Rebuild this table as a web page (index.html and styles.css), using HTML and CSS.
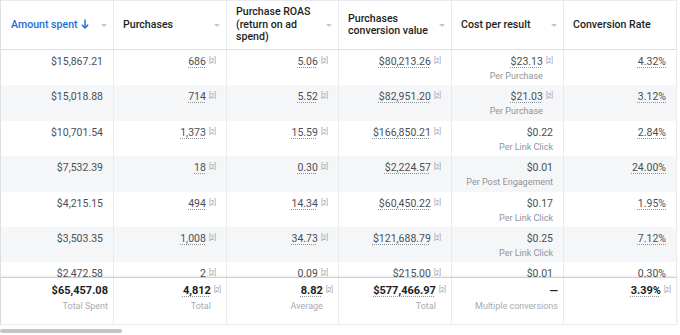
FILE: index.html
```html
<!DOCTYPE html>
<html lang="en">
<head>
  <meta charset="UTF-8">
  <title>Ads report</title>
  <link rel="stylesheet" href="styles.css">
</head>
<body>
  <div class="table">
    <div class="row head">
      <div class="th"><span class="title sorted">Amount spent <svg class="arrow" width="8" height="10" viewBox="0 0 8 10"><path d="M4 0.5V9M0.8 5.8L4 9L7.2 5.8" fill="none" stroke="currentColor" stroke-width="1.4"/></svg></span><span class="caret"></span></div>
      <div class="th"><span class="title">Purchases</span><span class="caret"></span></div>
      <div class="th"><span class="title">Purchase ROAS (return on ad spend)</span><span class="caret"></span></div>
      <div class="th"><span class="title">Purchases conversion value</span><span class="caret"></span></div>
      <div class="th"><span class="title">Cost per result</span><span class="caret"></span></div>
      <div class="th"><span class="title">Conversion Rate</span></div>
    </div>

    <div class="body">
      <div class="row">
        <div class="td"><div class="v">$15,867.21</div></div>
        <div class="td"><div class="v"><span class="u">686</span></div><span class="mk">[2]</span></div>
        <div class="td"><div class="v"><span class="u">5.06</span></div><span class="mk">[2]</span></div>
        <div class="td"><div class="v"><span class="u">$80,213.26</span></div><span class="mk">[2]</span></div>
        <div class="td"><div class="v"><span class="u">$23.13</span><div class="sub">Per Purchase</div></div><span class="mk">[2]</span></div>
        <div class="td"><div class="v"><span class="u">4.32%</span></div></div>
      </div>
      <div class="row alt">
        <div class="td"><div class="v">$15,018.88</div></div>
        <div class="td"><div class="v"><span class="u">714</span></div><span class="mk">[2]</span></div>
        <div class="td"><div class="v"><span class="u">5.52</span></div><span class="mk">[2]</span></div>
        <div class="td"><div class="v"><span class="u">$82,951.20</span></div><span class="mk">[2]</span></div>
        <div class="td"><div class="v"><span class="u">$21.03</span><div class="sub">Per Purchase</div></div><span class="mk">[2]</span></div>
        <div class="td"><div class="v"><span class="u">3.12%</span></div></div>
      </div>
      <div class="row">
        <div class="td"><div class="v">$10,701.54</div></div>
        <div class="td"><div class="v"><span class="u">1,373</span></div><span class="mk">[2]</span></div>
        <div class="td"><div class="v"><span class="u">15.59</span></div><span class="mk">[2]</span></div>
        <div class="td"><div class="v"><span class="u">$166,850.21</span></div><span class="mk">[2]</span></div>
        <div class="td"><div class="v">$0.22<div class="sub">Per Link Click</div></div></div>
        <div class="td"><div class="v"><span class="u">2.84%</span></div></div>
      </div>
      <div class="row alt">
        <div class="td"><div class="v">$7,532.39</div></div>
        <div class="td"><div class="v"><span class="u">18</span></div><span class="mk">[2]</span></div>
        <div class="td"><div class="v"><span class="u">0.30</span></div><span class="mk">[2]</span></div>
        <div class="td"><div class="v"><span class="u">$2,224.57</span></div><span class="mk">[2]</span></div>
        <div class="td"><div class="v">$0.01<div class="sub">Per Post Engagement</div></div></div>
        <div class="td"><div class="v"><span class="u">24.00%</span></div></div>
      </div>
      <div class="row">
        <div class="td"><div class="v">$4,215.15</div></div>
        <div class="td"><div class="v"><span class="u">494</span></div><span class="mk">[2]</span></div>
        <div class="td"><div class="v"><span class="u">14.34</span></div><span class="mk">[2]</span></div>
        <div class="td"><div class="v"><span class="u">$60,450.22</span></div><span class="mk">[2]</span></div>
        <div class="td"><div class="v">$0.17<div class="sub">Per Link Click</div></div></div>
        <div class="td"><div class="v"><span class="u">1.95%</span></div></div>
      </div>
      <div class="row alt">
        <div class="td"><div class="v">$3,503.35</div></div>
        <div class="td"><div class="v"><span class="u">1,008</span></div><span class="mk">[2]</span></div>
        <div class="td"><div class="v"><span class="u">34.73</span></div><span class="mk">[2]</span></div>
        <div class="td"><div class="v"><span class="u">$121,688.79</span></div><span class="mk">[2]</span></div>
        <div class="td"><div class="v">$0.25<div class="sub">Per Link Click</div></div></div>
        <div class="td"><div class="v"><span class="u">7.12%</span></div></div>
      </div>
      <div class="row">
        <div class="td"><div class="v">$2,472.58</div></div>
        <div class="td"><div class="v"><span class="u">2</span></div><span class="mk">[2]</span></div>
        <div class="td"><div class="v"><span class="u">0.09</span></div><span class="mk">[2]</span></div>
        <div class="td"><div class="v"><span class="u">$215.00</span></div><span class="mk">[2]</span></div>
        <div class="td"><div class="v">$0.01<div class="sub">Per Link Click</div></div></div>
        <div class="td"><div class="v"><span class="u">0.30%</span></div></div>
      </div>
    </div>

    <div class="row foot">
      <div class="td"><div class="v">$65,457.08<div class="sub">Total Spent</div></div></div>
      <div class="td"><div class="v"><span class="u">4,812</span><div class="sub">Total</div></div><span class="mk">[2]</span></div>
      <div class="td"><div class="v"><span class="u">8.82</span><div class="sub">Average</div></div><span class="mk">[2]</span></div>
      <div class="td"><div class="v"><span class="u">$577,466.97</span><div class="sub">Total</div></div><span class="mk">[2]</span></div>
      <div class="td"><div class="v">&mdash;<div class="sub">Multiple conversions</div></div></div>
      <div class="td"><div class="v"><span class="u">3.39%</span></div><span class="mk">[2]</span></div>
    </div>
  </div>
  <div class="scrollbar"><div class="thumb"></div></div>
</body>
</html>
```

FILE: styles.css
```css
:root {
  --line: #e9ebee;
  --shade: #f5f6f7;
  --text: #4b4f56;
  --dark: #1c1e21;
  --muted: #90949c;
  --blue: #1a6ed8;
}
*, *::before, *::after { box-sizing: border-box; }
body {
  margin: 0;
  width: 680px;
  height: 335px;
  overflow: hidden;
  background: #fff;
  font-family: Roboto, "Liberation Sans", sans-serif;
  color: var(--text);
}
.table {
  width: 677px;
  border-left: 1px solid #dddfe2;
}
.row {
  display: grid;
  grid-template-columns: 113px 113px 112px 113px 112px 113px;
}
.row.alt { background: var(--shade); }

/* header */
.head {
  height: 50px;
  border-top: 1px solid var(--line);
  border-bottom: 1px solid #dddfe2;
}
.th {
  display: flex;
  align-items: center;
  padding: 0 6px 0 9px;
  border-right: 1px solid var(--line);
  font-size: 10.6px;
  font-weight: 500;
  line-height: 12.5px;
  color: var(--dark);
}
.th:first-child { padding-left: 10px; }
.title {
  flex: 1;
  padding-right: 3px;
}
.title.sorted {
  color: var(--blue);
  padding-right: 0;
}
.arrow {
  vertical-align: -1px;
  margin-left: 1px;
}
.caret {
  width: 0;
  height: 0;
  border-left: 3px solid transparent;
  border-right: 3px solid transparent;
  border-top: 3px solid #c4c7cc;
}

/* body rows */
.body {
  height: 227px;
  overflow: hidden;
}
.body .row { height: 35.4px; }
.td {
  display: flex;
  justify-content: flex-end;
  align-items: flex-start;
  padding: 5px 10px 0 6px;
  border-right: 1px solid var(--line);
  font-size: 10.5px;
  line-height: 14px;
  white-space: nowrap;
}
.v { text-align: right; }
.u {
  text-decoration: underline dotted #8d949e;
  text-underline-offset: 2px;
}
.sub {
  font-size: 9px;
  line-height: 15px;
  color: var(--muted);
}
.mk {
  margin: 1px 0 0 3px;
  font-size: 6.5px;
  line-height: 10px;
  color: var(--muted);
}

/* totals */
.foot {
  position: relative;
  height: 48px;
  background: #fff;
  border-top: 1px solid #ccd0d5;
  border-bottom: 1px solid var(--line);
  box-shadow: 0 -1px 2px rgba(0,0,0,0.08);
}
.foot .td {
  padding: 6px 5px 0 6px;
}
.foot .v {
  font-size: 11px;
  font-weight: 700;
  color: var(--dark);
}
.foot .sub {
  font-weight: 400;
  line-height: 16px;
  color: #a7abb2;
}
.foot .mk { margin-top: 1px; }

.scrollbar {
  margin-top: 4px;
  height: 4px;
}
.thumb {
  width: 122px;
  height: 4px;
  border-radius: 2px;
  background: #c4c4c4;
}
```
